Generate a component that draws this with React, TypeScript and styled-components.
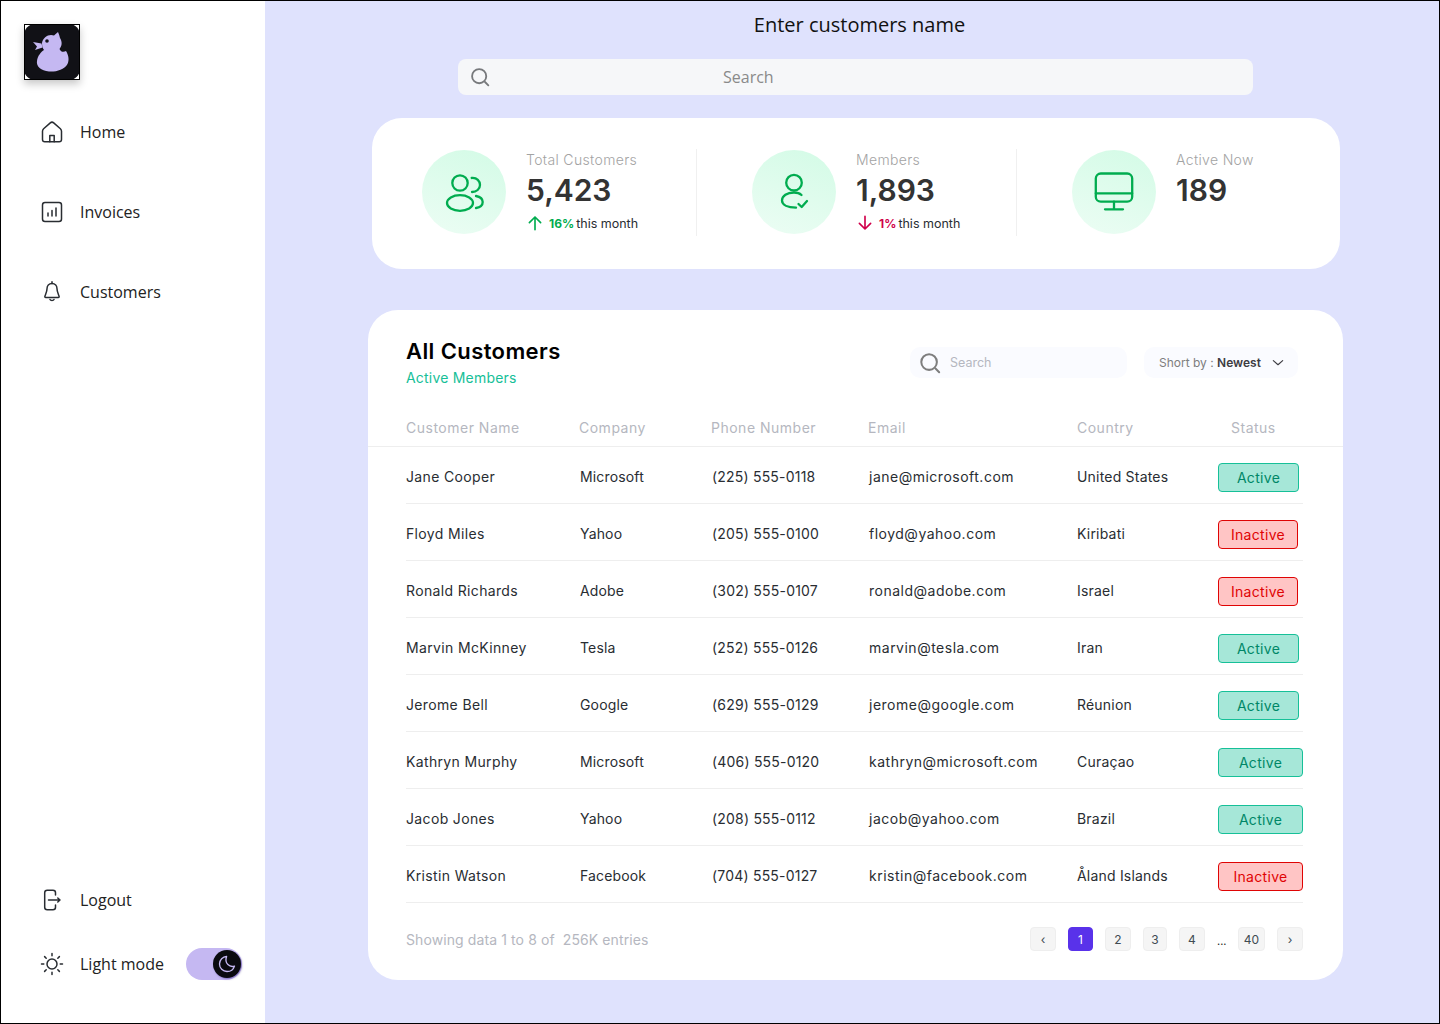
import React from 'react';
import styled, {createGlobalStyle} from 'styled-components';

const GlobalStyle = createGlobalStyle`
  * { box-sizing: border-box; }
  body {
    margin: 0;
    background: #fff;
    font-family: "Inter", "Liberation Sans", sans-serif;
  }
`;

const Page = styled.div`
  width: 1440px;
  height: 1024px;
  border: 1px solid #000;
  display: flex;
  overflow: hidden;
`;

const Sidebar = styled.aside`
  width: 264px;
  flex: none;
  background: #fff;
  padding: 23px 0 43px 23px;
  display: flex;
  flex-direction: column;
  font-family: "Open Sans", sans-serif;
  font-size: 16px;
  color: #222;
`;

const Logo = styled.div`
  width: 56px;
  height: 56px;
  border: 1px solid #000;
  box-shadow: 0 4px 8px rgba(0, 0, 0, 0.22);
  background: #fff;
  margin-bottom: 40px;
`;

const NavList = styled.nav`
  display: flex;
  flex-direction: column;
  gap: 56px;
  flex: 1;
`;

const NavItem = styled.div`
  display: flex;
  align-items: center;
  height: 24px;
  gap: 16px;
  padding-left: 16px;
`;

const BottomNav = styled.div`
  display: flex;
  flex-direction: column;
  gap: 40px;
`;

const ModeRow = styled(NavItem)`
  height: 32px;
  margin-top: -4px;
`;

const Toggle = styled.div`
  width: 56px;
  height: 32px;
  margin-left: 6px;
  border-radius: 16px;
  background: #c5b8f2;
  display: flex;
  justify-content: flex-end;
  align-items: center;
  padding-right: 1px;
`;

const Knob = styled.div`
  width: 28px;
  height: 28px;
  border-radius: 50%;
  background: #0a0a0f;
  box-shadow: 1px 1px 2px rgba(60, 40, 140, 0.5);
  display: flex;
  align-items: center;
  justify-content: center;
`;

const Main = styled.main`
  flex: 1;
  background: #dfe2fd;
  padding: 10px 0 0 102px;
`;

const PageTitle = styled.div`
  width: 975px;
  margin-left: 5px;
  text-align: center;
  font-family: "Open Sans", sans-serif;
  font-size: 20px;
  line-height: 27px;
  color: #111;
`;

const TopSearch = styled.div`
  width: 795px;
  height: 36px;
  margin: 21px 0 0 91px;
  padding-left: 12px;
  border-radius: 8px;
  background: #f6f7f9;
  display: flex;
  align-items: center;
  gap: 233px;
  font-family: "Open Sans", sans-serif;
  font-size: 16px;
  color: #8a8a8a;
`;

const StatCard = styled.section`
  width: 968px;
  height: 151px;
  margin: 23px 0 0 5px;
  padding-top: 31px;
  border-radius: 30px;
  background: #fff;
  display: grid;
  grid-template-columns: 325px 320px 1fr;
  align-items: flex-start;
`;

const StatCell = styled.div<{$first?: boolean; $last?: boolean}>`
  height: 87px;
  padding: 1px 0 0 ${p => (p.$first ? '50px' : '55px')};
  border-right: ${p => (p.$last ? 'none' : '1px solid #f0f0f0')};
  display: flex;
  align-items: flex-start;
  gap: 20px;
`;

const StatCircle = styled.div`
  width: 84px;
  height: 84px;
  flex: none;
  border-radius: 50%;
  background: linear-gradient(200deg, #d3fbe6 0%, #ecfdf4 100%);
  display: flex;
  align-items: center;
  justify-content: center;
`;

const StatBody = styled.div`
  display: flex;
  flex-direction: column;
  padding-top: 1px;
`;

const StatLabel = styled.div`
  font-size: 14px;
  line-height: 18px;
  font-weight: 300;
  letter-spacing: 0.35px;
  color: #a3a3a3;
`;

const StatValue = styled.div`
  font-size: 30px;
  line-height: 40px;
  margin-top: 1px;
  font-weight: 600;
  color: #333;
`;

const Trend = styled.div`
  display: flex;
  align-items: center;
  height: 18px;
  margin-top: 4px;
  font-size: 12.5px;
  color: #292d32;
`;

const TrendValue = styled.b<{$down?: boolean}>`
  font-size: 12px;
  font-weight: 700;
  margin: 0 2px 0 5px;
  color: ${p => (p.$down ? '#d0004b' : '#00ac4f')};
`;

const TableCard = styled.section`
  width: 975px;
  height: 670px;
  margin: 41px 0 0 1px;
  border-radius: 30px;
  background: #fff;
  padding-top: 25px;
`;

const CardHead = styled.div`
  height: 75px;
  padding: 0 45px 0 38px;
  display: flex;
  align-items: flex-start;
`;

const Heading = styled.div`
  flex: 1;
`;

const CardTitle = styled.div`
  font-size: 22px;
  line-height: 33px;
  font-weight: 600;
  letter-spacing: 0.4px;
  color: #000;
`;

const CardSub = styled.div`
  font-size: 14px;
  line-height: 20px;
  letter-spacing: 0.2px;
  color: #16c098;
`;

const Control = styled.div`
  height: 31px;
  margin-top: 12px;
  border-radius: 10px;
  background: #fafbff;
  display: flex;
  align-items: center;
`;

const SearchControl = styled(Control)`
  width: 217px;
  padding-left: 9px;
  gap: 9px;
  font-size: 12.5px;
  color: #b5b7c0;
`;

const SortControl = styled(Control)`
  width: 154px;
  margin-left: 17px;
  padding-left: 15px;
  font-size: 12px;
  color: #7e7e7e;
  gap: 10px;
`;

const SortText = styled.span`
  b {
    color: #3d3c42;
    font-weight: 600;
  }
`;

const HeaderRow = styled.div`
  height: 37px;
  padding: 0 0 2px 38px;
  border-bottom: 1px solid #eeeeee;
  display: grid;
  grid-template-columns: 173px 132px 157px 209px 141px 1fr;
  align-items: center;
  font-size: 14px;
  letter-spacing: 0.5px;
  color: #b5b7c0;
`;

const StatusHead = styled.div`
  padding-left: 13px;
`;

const Row = styled.div`
  height: 57px;
  margin: 0 40px 0 38px;
  padding-top: 3px;
  border-bottom: 1px solid #eeeeee;
  display: grid;
  grid-template-columns: 173px 132px 157px 209px 141px 1fr;
  align-items: center;
  font-size: 14px;
  color: #292d32;
`;

const Cell = styled.div<{$track: number; $indent?: number}>`
  letter-spacing: ${p => p.$track}px;
  padding-left: ${p => p.$indent ?? 0}px;
`;

const Badge = styled.div<{$active: boolean; $width: number}>`
  width: ${p => p.$width}px;
  height: 29px;
  margin-top: 2px;
  border-radius: 4px;
  border: 1px solid ${p => (p.$active ? '#16c098' : '#df0404')};
  background: ${p => (p.$active ? 'rgba(22, 192, 152, 0.38)' : '#ffc5c5')};
  color: ${p => (p.$active ? '#008767' : '#df0404')};
  display: flex;
  align-items: center;
  justify-content: center;
  font-size: 14px;
  letter-spacing: 0.3px;
`;

const Footer = styled.div`
  height: 72px;
  margin: 0 40px 0 38px;
  display: flex;
  align-items: center;
  justify-content: space-between;
  font-size: 14px;
  letter-spacing: 0.1px;
  color: #b5b7c0;
`;

const Pager = styled.div`
  display: flex;
  align-items: center;
  gap: 12px;
`;

const PageButton = styled.div<{$active?: boolean; $width: number}>`
  width: ${p => p.$width}px;
  height: 24px;
  border-radius: 4px;
  background: ${p => (p.$active ? '#5932ea' : '#f5f5f5')};
  border: 1px solid ${p => (p.$active ? '#5932ea' : '#eeeeee')};
  color: ${p => (p.$active ? '#fff' : '#404b52')};
  display: flex;
  align-items: center;
  justify-content: center;
  font-size: 12px;
  letter-spacing: 0;
`;

const Dots = styled.span`
  width: 9px;
  font-size: 11px;
  letter-spacing: 0;
  color: #222;
  padding-top: 4px;
`;

type IconProps = {size?: number; color?: string; width?: number};

const Svg: React.FC<IconProps & {box?: number; children: React.ReactNode}> = ({
  size = 24,
  color = '#292d32',
  width = 1.5,
  box = 24,
  children,
}) => (
  <svg
    width={size}
    height={size}
    viewBox={`0 0 ${box} ${box}`}
    fill="none"
    stroke={color}
    strokeWidth={width}
    strokeLinecap="round"
    strokeLinejoin="round"
    style={{flex: 'none', display: 'block'}}
  >
    {children}
  </svg>
);

const DuckLogo = () => (
  <svg width={54} height={54} viewBox="1 1 54 54" style={{display: 'block'}}>
    <rect x="0" y="0" width="56" height="56" rx="11" fill="#111116" />
    <path
      d="M18 19C19 13 25 9.5 30 11.5L34 8C35 10 35.5 12 36 14C38.5 18 38 22 35.5 25C37 28 39.5 28.5 42 27C44.5 31 45.5 36 43.5 40C40 46 32 48 25 47.5C17 47 12 42 13 37C13.5 32 17 28 20 26C18.5 24 18 22 18 19Z"
      fill="#c5b8f2"
    />
    <circle cx="23" cy="17" r="1.8" fill="#111116" />
    <path d="M9 18L17.5 19.5L18.5 23.5L11 26L13 22.5Z" fill="#c5b8f2" />
  </svg>
);

const HomeIcon = () => (
  <Svg>
    <path d="M2.5 11.2C2.5 10.2 3 9.4 3.6 8.8L10.3 2.9C11.3 2 12.7 2 13.7 2.9L20.4 8.8C21 9.4 21.5 10.2 21.5 11.2V19.5C21.5 21 20.7 21.8 19.2 21.8H4.8C3.3 21.8 2.5 21 2.5 19.5Z" />
    <path d="M9.8 21.8V15.6H14.2V21.8" />
  </Svg>
);

const InvoiceIcon = () => (
  <Svg>
    <rect x="2.5" y="2.5" width="19" height="19" rx="2.5" />
    <path d="M8 16V13M12 16V10.5M16 16V8" />
  </Svg>
);

const BellIcon = () => (
  <Svg>
    <path d="M12 3.5C8.8 3.5 7 6 7 8.8C7 12.5 5 15 4.8 16.8C4.8 17.3 5 17.5 5.6 17.5H18.4C19 17.5 19.2 17.3 19.2 16.8C19 15 17 12.5 17 8.8C17 6 15.2 3.5 12 3.5Z" />
    <path d="M12 1.8V3.5M10 19.5C10.6 20.8 13.4 20.8 14 19.5" />
  </Svg>
);

const LogoutIcon = () => (
  <Svg>
    <path d="M15.5 7V4.8C15.5 3 14.8 2.3 13 2.3H7.2C5.4 2.3 4.7 3 4.7 4.8V19.2C4.7 21 5.4 21.7 7.2 21.7H13C14.8 21.7 15.5 21 15.5 19.2V17" />
    <path d="M8.5 12H20M20 12L17.8 10M20 12L17.8 14" />
  </Svg>
);

const SunIcon = () => (
  <Svg>
    <circle cx="12" cy="12" r="5" />
    <path d="M12 1.5V3.8M12 20.2V22.5M1.5 12H3.8M20.2 12H22.5M4.6 4.6L6.2 6.2M17.8 17.8L19.4 19.4M4.6 19.4L6.2 17.8M17.8 6.2L19.4 4.6" />
  </Svg>
);

const MoonIcon = () => (
  <Svg size={20} color="#c5b8f2" width={1.6}>
    <path d="M11.5 3C7 3.2 3 6.8 3 12C3 17 7 21 12 21C16.2 21 19.8 18.4 21 14.5C15.5 16.5 8.5 11.5 11.5 3Z" />
  </Svg>
);

const SearchIcon: React.FC<{size: number; color: string}> = ({size, color}) => (
  <Svg size={size} color={color} width={2.2}>
    <circle cx="11" cy="11" r="8.5" />
    <path d="M18 18L22 22" />
  </Svg>
);

const Chevron = () => (
  <Svg size={14} color="#3d3c42" width={2}>
    <path d="M4 8L12 15L20 8" />
  </Svg>
);

const UsersIcon = () => (
  <Svg size={40} box={40} color="#00ac4f" width={2.3}>
    <circle cx="16" cy="11" r="7.7" />
    <ellipse cx="16" cy="31" rx="13" ry="7.8" />
    <path d="M27.7 6C33 5.5 36 9 36 13C36 17 32.5 20 28 20" />
    <path d="M32 24C36 24.8 38.7 27 38.7 30C38.7 33 36 35.3 32 36" />
  </Svg>
);

const MemberIcon = () => (
  <Svg size={40} box={40} color="#00ac4f" width={2.3}>
    <circle cx="20" cy="10.7" r="7.8" />
    <path d="M27.5 23C25.5 21.2 23 20.5 20 20.5C13 20.5 8 24 8 28.5C8 33 14 35.5 22 35.7" />
    <path d="M24.5 32L27.7 35L33 29" />
  </Svg>
);

const MonitorIcon = () => (
  <Svg size={40} box={40} color="#00ac4f" width={2.3}>
    <rect x="1.8" y="1.5" width="36.4" height="28.2" rx="5" />
    <path d="M1.8 21.3H38.2M20 29.7V37.3M11 37.3H29" />
  </Svg>
);

const ArrowUp = () => (
  <Svg size={18} color="#00ac4f" width={2.2}>
    <path d="M12 21V4M4.5 11.5L12 4L19.5 11.5" />
  </Svg>
);

const ArrowDown = () => (
  <Svg size={18} color="#d0004b" width={2.2}>
    <path d="M12 3V20M4.5 12.5L12 20L19.5 12.5" />
  </Svg>
);

type Customer = {
  name: string;
  company: string;
  phone: string;
  email: string;
  country: string;
  active: boolean;
  badge: number;
};

const customers: Customer[] = [
  {name: 'Jane Cooper', company: 'Microsoft', phone: '(225) 555-0118', email: 'jane@microsoft.com', country: 'United States', active: true, badge: 81},
  {name: 'Floyd Miles', company: 'Yahoo', phone: '(205) 555-0100', email: 'floyd@yahoo.com', country: 'Kiribati', active: false, badge: 80},
  {name: 'Ronald Richards', company: 'Adobe', phone: '(302) 555-0107', email: 'ronald@adobe.com', country: 'Israel', active: false, badge: 80},
  {name: 'Marvin McKinney', company: 'Tesla', phone: '(252) 555-0126', email: 'marvin@tesla.com', country: 'Iran', active: true, badge: 81},
  {name: 'Jerome Bell', company: 'Google', phone: '(629) 555-0129', email: 'jerome@google.com', country: 'Réunion', active: true, badge: 81},
  {name: 'Kathryn Murphy', company: 'Microsoft', phone: '(406) 555-0120', email: 'kathryn@microsoft.com', country: 'Curaçao', active: true, badge: 85},
  {name: 'Jacob Jones', company: 'Yahoo', phone: '(208) 555-0112', email: 'jacob@yahoo.com', country: 'Brazil', active: true, badge: 85},
  {name: 'Kristin Watson', company: 'Facebook', phone: '(704) 555-0127', email: 'kristin@facebook.com', country: 'Åland Islands', active: false, badge: 85},
];

const App: React.FC = () => {
  return (
    <Page>
      <GlobalStyle />
      <Sidebar>
        <Logo><DuckLogo /></Logo>
        <NavList>
          <NavItem><HomeIcon />Home</NavItem>
          <NavItem><InvoiceIcon />Invoices</NavItem>
          <NavItem><BellIcon />Customers</NavItem>
        </NavList>
        <BottomNav>
          <NavItem><LogoutIcon />Logout</NavItem>
          <ModeRow>
            <SunIcon />Light mode
            <Toggle><Knob><MoonIcon /></Knob></Toggle>
          </ModeRow>
        </BottomNav>
      </Sidebar>
      <Main>
        <PageTitle>Enter customers name</PageTitle>
        <TopSearch>
          <SearchIcon size={20} color="#77797c" />
          Search
        </TopSearch>
        <StatCard>
          <StatCell $first>
            <StatCircle><UsersIcon /></StatCircle>
            <StatBody>
              <StatLabel>Total Customers</StatLabel>
              <StatValue>5,423</StatValue>
              <Trend><ArrowUp /><TrendValue>16%</TrendValue>this month</Trend>
            </StatBody>
          </StatCell>
          <StatCell>
            <StatCircle><MemberIcon /></StatCircle>
            <StatBody>
              <StatLabel>Members</StatLabel>
              <StatValue>1,893</StatValue>
              <Trend><ArrowDown /><TrendValue $down>1%</TrendValue>this month</Trend>
            </StatBody>
          </StatCell>
          <StatCell $last>
            <StatCircle><MonitorIcon /></StatCircle>
            <StatBody>
              <StatLabel>Active Now</StatLabel>
              <StatValue>189</StatValue>
            </StatBody>
          </StatCell>
        </StatCard>
        <TableCard>
          <CardHead>
            <Heading>
              <CardTitle>All Customers</CardTitle>
              <CardSub>Active Members</CardSub>
            </Heading>
            <SearchControl>
              <SearchIcon size={22} color="#7e7e7e" />
              Search
            </SearchControl>
            <SortControl>
              <SortText>Short by : <b>Newest</b></SortText>
              <Chevron />
            </SortControl>
          </CardHead>
          <HeaderRow>
            <div>Customer Name</div>
            <div>Company</div>
            <div>Phone Number</div>
            <div>Email</div>
            <div>Country</div>
            <StatusHead>Status</StatusHead>
          </HeaderRow>
          {customers.map(c => (
            <Row key={c.name}>
              <Cell $track={0.35}>{c.name}</Cell>
              <Cell $track={0.15} $indent={1}>{c.company}</Cell>
              <Cell $track={0.2} $indent={1}>{c.phone}</Cell>
              <Cell $track={0.5} $indent={1}>{c.email}</Cell>
              <Cell $track={0.2}>{c.country}</Cell>
              <Badge $active={c.active} $width={c.badge}>{c.active ? 'Active' : 'Inactive'}</Badge>
            </Row>
          ))}
          <Footer>
            <div>Showing data 1 to 8 of&nbsp; 256K entries</div>
            <Pager>
              <PageButton $width={26}>‹</PageButton>
              <PageButton $width={25} $active>1</PageButton>
              <PageButton $width={26}>2</PageButton>
              <PageButton $width={24}>3</PageButton>
              <PageButton $width={26}>4</PageButton>
              <Dots>...</Dots>
              <PageButton $width={27}>40</PageButton>
              <PageButton $width={26}>›</PageButton>
            </Pager>
          </Footer>
        </TableCard>
      </Main>
    </Page>
  );
};

export default App;
